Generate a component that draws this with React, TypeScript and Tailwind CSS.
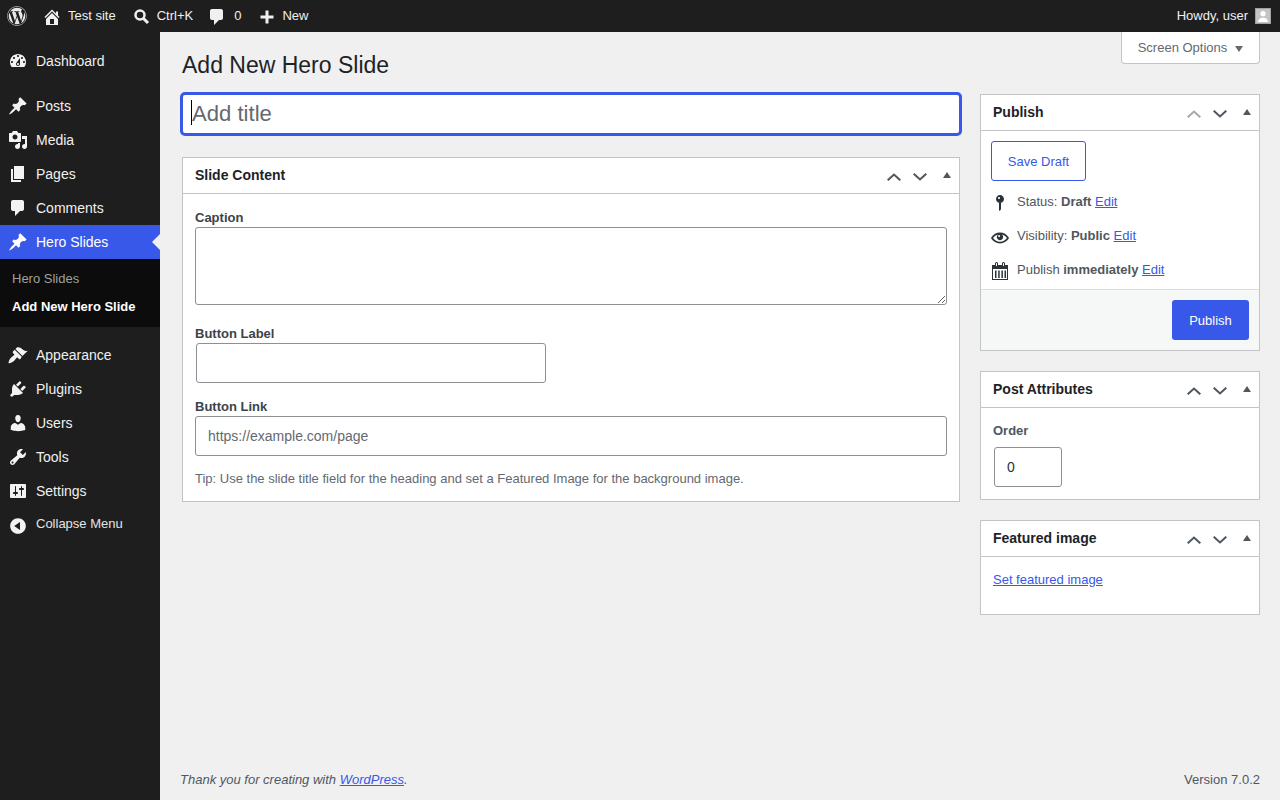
import React from 'react';
import { FaWordpress } from 'react-icons/fa';

const paths: Record<string, string> = {
  dashboard: 'M3.76 16h12.48c1.1-1.37 1.76-3.11 1.76-5 0-4.42-3.58-8-8-8s-8 3.58-8 8c0 1.89.66 3.63 1.76 5zM10 4c.55 0 1 .45 1 1s-.45 1-1 1-1-.45-1-1 .45-1 1-1zM6 6c.55 0 1 .45 1 1s-.45 1-1 1-1-.45-1-1 .45-1 1-1zm8 0c.55 0 1 .45 1 1s-.45 1-1 1-1-.45-1-1 .45-1 1-1zm-5.37 5.55L12 7v6c0 1.1-.9 2-2 2s-2-.9-2-2c0-.57.24-1.08.63-1.45zM4 10c.55 0 1 .45 1 1s-.45 1-1 1-1-.45-1-1 .45-1 1-1zm12 0c.55 0 1 .45 1 1s-.45 1-1 1-1-.45-1-1 .45-1 1-1zm-5 3c0-.55-.45-1-1-1s-1 .45-1 1 .45 1 1 1 1-.45 1-1z',
  pin: 'M10.44 3.02l1.82-1.82 6.36 6.35-1.83 1.82c-1.05-.68-2.48-.57-3.41.36l-.75.75c-.92.93-1.04 2.35-.35 3.41l-1.83 1.82-2.41-2.41-2.8 2.79c-.42.42-3.38 2.71-3.8 2.29s1.86-3.39 2.28-3.81l2.79-2.79L4.1 9.36l1.83-1.82c1.05.69 2.48.57 3.4-.36l.75-.75c.93-.92 1.05-2.35.36-3.41z',
  media: 'M13 11V4c0-.55-.45-1-1-1h-1.67L9 1H5L3.67 3H2c-.55 0-1 .45-1 1v7c0 .55.45 1 1 1h10c.55 0 1-.45 1-1zM7 4.5c1.38 0 2.5 1.12 2.5 2.5S8.38 9.5 7 9.5 4.5 8.38 4.5 7 5.62 4.5 7 4.5zM14 6h5v10.5c0 1.38-1.12 2.5-2.5 2.5S14 17.88 14 16.5s1.12-2.5 2.5-2.5c.17 0 .34.02.5.05V9h-3V6zm-4 8.05V13h2v3.5c0 1.38-1.12 2.5-2.5 2.5S7 17.88 7 16.5 8.12 14 9.5 14c.17 0 .34.02.5.05z',
  page: 'M6 15V2h10v13H6zm-1 1h8v2H3V5h2v11z',
  comment: 'M5 2h9c1.1 0 2 .9 2 2v7c0 1.1-.9 2-2 2h-2l-5 5v-5H5c-1.1 0-2-.9-2-2V4c0-1.1.9-2 2-2z',
  appearance: 'M14.48 11.06L7.41 3.99l1.5-1.5c.5-.56 2.3-.47 3.51.32 1.21.8 1.43 1.28 2.91 2.1 1.18.64 2.45 1.26 4.45.85zm-.71.71L6.7 4.7 4.93 6.47c-.39.39-.39 1.02 0 1.41l1.06 1.06c.39.39.39 1.03 0 1.42-.6.6-1.43 1.11-2.21 1.69-.35.26-.7.53-1.01.84-1.43 1.43-2.56 4.77-2.06 5.27.5.5 3.84-.63 5.27-2.06.31-.31.58-.66.84-1.01.58-.78 1.09-1.61 1.69-2.21.39-.39 1.03-.39 1.42 0l1.06 1.06c.39.39 1.02.39 1.41 0z',
  plugins: 'M13.11 4.36L9.87 7.6 8 5.73l3.24-3.24c.35-.34 1.05-.2 1.56.32.52.51.66 1.21.31 1.55zm-8 1.77l.91-1.12 9.01 9.01-1.19.84c-.71.71-2.63 1.16-3.82 1.16H6.14L4.9 17.26c-.59.59-1.54.59-2.12 0-.59-.58-.59-1.53 0-2.12l1.24-1.24v-3.88c0-1.13.4-3.19 1.09-3.89zm7.26 3.97l3.24-3.24c.34-.35 1.04-.21 1.55.31.52.51.66 1.21.31 1.55l-3.24 3.25z',
  users: 'M10 9.25c-2.27 0-2.73-3.44-2.73-3.44C7 4.02 7.82 2 9.97 2c2.16 0 2.98 2.02 2.71 3.81 0 0-.41 3.44-2.68 3.44zm0 2.57L12.72 10c2.39 0 4.52 2.33 4.52 4.53v2.49s-3.65 1.13-7.24 1.13c-3.65 0-7.24-1.13-7.24-1.13v-2.49c0-2.25 1.94-4.48 4.47-4.48z',
  tools: 'M16.68 9.77c-1.34 1.34-3.3 1.67-4.95.99l-5.41 6.52c-.99.99-2.59.99-3.58 0s-.99-2.59 0-3.57l6.52-5.42c-.68-1.65-.35-3.61.99-4.95 1.28-1.28 3.12-1.62 4.72-1.06l-2.89 2.89 2.82 2.82 2.86-2.87c.53 1.58.18 3.39-1.08 4.65zM3.81 16.21c.4.39 1.04.39 1.43 0 .4-.4.4-1.04 0-1.43-.39-.4-1.03-.4-1.43 0-.39.39-.39 1.03 0 1.43z',
  settings: 'M18 16V4c0-.55-.45-1-1-1H3c-.55 0-1 .45-1 1v12c0 .55.45 1 1 1h14c.55 0 1-.45 1-1zM8 11h1c.55 0 1 .45 1 1s-.45 1-1 1H8v1.5c0 .28-.22.5-.5.5s-.5-.22-.5-.5V13H6c-.55 0-1-.45-1-1s.45-1 1-1h1V5.5c0-.28.22-.5.5-.5s.5.22.5.5V11zm5-2h-1c-.55 0-1-.45-1-1s.45-1 1-1h1V5.5c0-.28.22-.5.5-.5s.5.22.5.5V7h1c.55 0 1 .45 1 1s-.45 1-1 1h-1v5.5c0 .28-.22.5-.5.5s-.5-.22-.5-.5V9z',
  collapse: 'M10 2.16c4.33 0 7.84 3.51 7.84 7.84s-3.51 7.84-7.84 7.84S2.16 14.33 2.16 10 5.71 2.16 10 2.16zm2 11.72V6.12L6.18 9.97z',
  home: 'M16 8.5l1.53 1.53-1.06 1.06L10 4.62l-6.47 6.47-1.06-1.06L10 2.5l4 4v-2h2v4zm-6-2.46l6 5.99V18H4v-5.97zM12 17v-5H8v5h4z',
  plus: 'M16.500 8.500v3h-5v5h-3v-5h-5v-3h5v-5h3v5z',
  status: 'M14 6c0 1.86-1.28 3.41-3 3.86V16c0 1-2 2-2 2V9.86c-1.72-.45-3-2-3-3.86 0-2.21 1.79-4 4-4s4 1.79 4 4zM8 5c0 .55.45 1 1 1s1-.45 1-1-.45-1-1-1-1 .45-1 1z',
  eye: 'M19.7 9.4C17.7 6 14 3.9 10 3.9S2.3 6 .3 9.4L0 10l.3.6c2 3.4 5.7 5.5 9.7 5.5s7.7-2.1 9.7-5.5l.3-.6-.3-.6zM10 14.1c-3.1 0-6-1.6-7.7-4.1C3.6 8 5.7 6.6 8 6.1c-.9.6-1.500 1.700-1.500 2.900 0 1.900 1.600 3.500 3.500 3.500s3.500-1.600 3.500-3.500c0-1.200-.6-2.200-1.500-2.900 2.300.5 4.400 1.900 5.700 3.900-1.700 2.500-4.600 4.100-7.700 4.100zM9 6.700a1.100 1.100 0 1 0 .01 0z',
  calendar: 'M2 4h3V2.500a1.500 1.500 0 0 1 3 0V4h4V2.500a1.500 1.500 0 0 1 3 0V4h3v15H2V4zM6 2.500V5h1V2.500a.5.500 0 0 0-1 0zM13 2.500V5h1V2.500a.5.500 0 0 0-1 0zM3 8v10h14V8H3zm2 1.500h1.500V17H5V9.500zm3.200 0h1.500V17H8.200V9.500zm3.200 0h1.500V17h-1.500V9.500zm3.100 0H16V17h-1.500V9.500z',
};

const Icon = ({ name, className = 'w-5 h-5' }: { name: string; className?: string }) => (
  <svg viewBox="0 0 20 20" className={className} fill="currentColor">
    <path fillRule="evenodd" d={paths[name]} />
  </svg>
);

const menuTop = [{ icon: 'pin', label: 'Posts' }, { icon: 'media', label: 'Media' }, { icon: 'page', label: 'Pages' }, { icon: 'comment', label: 'Comments' }];
const menuBottom = [
  { icon: 'appearance', label: 'Appearance' },
  { icon: 'plugins', label: 'Plugins' },
  { icon: 'users', label: 'Users' },
  { icon: 'tools', label: 'Tools' },
  { icon: 'settings', label: 'Settings' },
];

const MenuItem = ({ icon, label }: { icon: string; label: string }) => (
  <div className="h-[34px] flex items-center gap-2 pl-2 text-[14px] text-[#f0f0f0]">
    <Icon name={icon} className="w-5 h-5 text-[#f3f3f3] shrink-0" />
    <span>{label}</span>
  </div>
);

const BoxControls = ({ upDisabled }: { upDisabled?: boolean }) => (
  <div className="flex items-center text-[#50575e]">
    <svg viewBox="0 0 14 8" className={`w-[14px] h-2 mt-[2px] ${upDisabled ? 'text-[#a7aaad]' : ''}`} fill="none" stroke="currentColor" strokeWidth="2">
      <path d="M.7 7.300L7 1.500l6.300 5.800" />
    </svg>
    <svg viewBox="0 0 14 8" className="w-[14px] h-2 ml-3 mt-[2px]" fill="none" stroke="currentColor" strokeWidth="2">
      <path d="M.7.700L7 6.500 13.300.700" />
    </svg>
    <svg viewBox="0 0 8 6" className="w-2 h-[6px] ml-[16px] mr-2 -mt-[2px]" fill="currentColor">
      <path d="M4 0l4 6H0z" />
    </svg>
  </div>
);

const Box = ({ title, upDisabled, className = '', children }: { title: string; upDisabled?: boolean; className?: string; children: React.ReactNode }) => (
  <div className={`bg-white border border-[#c3c4c7] ${className}`}>
    <div className="h-9 flex items-center justify-between pl-3 border-b border-[#c3c4c7]">
      <h2 className="text-[14px] font-bold text-[#1d2327]">{title}</h2>
      <BoxControls upDisabled={upDisabled} />
    </div>
    {children}
  </div>
);

const MetaRow = ({ icon, iconClass = 'w-5 h-5 mt-[2px]', children }: { icon: string; iconClass?: string; children: React.ReactNode }) => (
  <div className="h-[34px] flex items-center pl-[9px] text-[13px] text-[#50575e]">
    <Icon name={icon} className={`text-[#2c3338] shrink-0 ${iconClass}`} />
    <span className="ml-[7px]">{children}</span>
  </div>
);

const Edit = () => <a href="#" className="text-[#3858e9] underline">Edit</a>;

const App = () => {
  return (
    <div className="h-screen flex flex-col overflow-hidden bg-[#f0f0f1] text-[13px] text-[#3c434a] font-['Liberation_Sans',Arial,sans-serif]">
      {/* admin bar */}
      <header className="h-8 shrink-0 bg-[#1e1e1e] text-[#f0f0f1] flex items-center text-[13px]">
        <FaWordpress className="w-5 h-5 ml-[7px] text-[#e8e8e8]" />
        <Icon name="home" className="w-5 h-5 ml-[15px] mt-[1px]" />
        <span className="ml-[6px]">Test site</span>
        <svg viewBox="0 0 20 20" className="w-5 h-5 ml-[15px] mt-[2px]" fill="none" stroke="currentColor">
          <circle cx="9" cy="8" r="4.500" strokeWidth="2.500" />
          <path d="M12.500 11.500l4.500 4.500" strokeWidth="3" />
        </svg>
        <span className="ml-[6px]">Ctrl+K</span>
        <Icon name="comment" className="w-5 h-5 ml-[14px] mt-[1px]" />
        <span className="ml-[7px]">0</span>
        <Icon name="plus" className="w-5 h-5 ml-[16px] mt-[1px]" />
        <span className="ml-[5px]">New</span>
        <span className="ml-auto">Howdy, user</span>
        <div className="w-4 h-4 ml-[7px] mr-[9px] bg-[#c4c4c4] border border-[#a0a0a0] flex items-end justify-center overflow-hidden">
          <svg viewBox="0 0 16 16" className="w-4 h-4 text-white" fill="currentColor">
            <circle cx="8" cy="6.500" r="3" />
            <path d="M2.500 16c0-3.500 2.500-5 5.500-5s5.500 1.500 5.500 5z" />
          </svg>
        </div>
      </header>

      <div className="flex-1 flex min-h-0">
        {/* sidebar */}
        <aside className="w-40 shrink-0 bg-[#1e1e1e] pt-3">
          <MenuItem icon="dashboard" label="Dashboard" />
          <div className="h-[11px]" />
          {menuTop.map((m) => (
            <MenuItem key={m.label} icon={m.icon} label={m.label} />
          ))}
          <div className="relative h-[34px] flex items-center gap-2 pl-2 bg-[#3858e9] text-white text-[14px]">
            <Icon name="pin" />
            <span>Hero Slides</span>
            <div className="absolute right-0 top-[9px] border-y-[8px] border-r-[8px] border-y-transparent border-r-[#f0f0f1]" />
          </div>
          <div className="h-[68px] bg-[#0c0c0c] pl-3 pt-[6px] text-[13px]">
            <div className="h-7 flex items-center text-[#a0a0a0]">Hero Slides</div>
            <div className="h-7 flex items-center font-bold text-white">Add New Hero Slide</div>
          </div>
          <div className="h-[11px]" />
          {menuBottom.map((m) => (
            <MenuItem key={m.label} icon={m.icon} label={m.label} />
          ))}
          <div className="h-[34px] flex items-center gap-2 pl-2 text-[13px] text-[#e4e4e4]">
            <Icon name="collapse" className="w-5 h-5 text-[#f3f3f3] mt-[1px]" />
            <span className="-mt-[2px]">Collapse Menu</span>
          </div>
        </aside>

        {/* content */}
        <main className="flex-1 min-w-0 flex flex-col pl-5 pr-5">
          <div className="h-[62px] shrink-0 flex justify-between items-start pl-[2px]">
            <h1 className="text-[23px] leading-[29px] font-normal text-[#1d2327] pt-[19px]">Add New Hero Slide</h1>
            <button className="w-[139px] h-8 bg-white border border-t-0 border-[#c3c4c7] rounded-b-[4px] flex items-center justify-center gap-2 text-[13px] text-[#646970]">
              Screen Options
              <svg viewBox="0 0 8 6" className="w-2 h-[6px] mt-[2px]" fill="currentColor">
                <path d="M0 0h8L4 6z" />
              </svg>
            </button>
          </div>

          <div className="flex-1 flex items-start pl-[2px]">
            <div className="w-[778px] shrink-0">
              <div className="relative">
                <input
                  placeholder="Add title"
                  className="block w-[782px] h-[44px] -ml-[2px] -mt-[2px] bg-white border-[3px] border-[#3858e9] rounded-[5px] pl-[9px] text-[22.100px] text-[#2c3338] outline-none placeholder:text-[#646970]"
                />
                <span className="absolute left-[9px] top-[8px] w-px h-[25px] bg-black" />
              </div>

              <Box title="Slide Content" className="mt-[21px]">
                <div className="px-3 pt-[15px] pb-[13px]">
                  <label className="block font-bold text-[13px] leading-[18px]">Caption</label>
                  <textarea className="block w-full h-[78px] bg-white border border-[#8c8f94] rounded-[3px] outline-none" />
                  <label className="block font-bold text-[13px] leading-[18px] mt-[20px]">Button Label</label>
                  <input className="block w-[350px] h-10 ml-px bg-white border border-[#8c8f94] rounded-[3px] outline-none" />
                  <label className="block font-bold text-[13px] leading-[18px] mt-[15px]">Button Link</label>
                  <input
                    placeholder="https://example.com/page"
                    className="block w-full h-10 px-3 bg-white border border-[#8c8f94] rounded-[3px] text-[14px] outline-none placeholder:text-[#646970]"
                  />
                  <p className="text-[13px] leading-[18px] text-[#646970] mt-[14px]">
                    Tip: Use the slide title field for the heading and set a Featured Image for the background image.
                  </p>
                </div>
              </Box>
            </div>

            <div className="w-[280px] ml-5 shrink-0 flex flex-col gap-5">
              <Box title="Publish" upDisabled>
                <div className="pl-[10px] pt-[10px]">
                  <button className="w-[95px] h-10 pt-px border border-[#3858e9] rounded-[3px] text-[#3858e9] text-[13px]">Save Draft</button>
                </div>
                <div className="pt-[4px]">
                  <MetaRow icon="status">Status: <b>Draft</b> <Edit /></MetaRow>
                  <MetaRow icon="eye" iconClass="w-[18px] h-[18px] mx-px mt-1">Visibility: <b>Public</b> <Edit /></MetaRow>
                  <MetaRow icon="calendar">Publish <b>immediately</b> <Edit /></MetaRow>
                </div>
                <div className="h-[61px] mt-[2px] border-t border-[#dcdcde] bg-[#f6f7f7] flex justify-end items-start pt-[10px] pr-[10px]">
                  <button className="w-[77px] h-10 pt-px bg-[#3858e9] rounded-[3px] text-white text-[13px]">Publish</button>
                </div>
              </Box>

              <Box title="Post Attributes">
                <div className="pl-3 pt-[15px] pb-3">
                  <div className="font-bold text-[13px] leading-[15px] text-[#50575e]">Order</div>
                  <input defaultValue="0" className="block w-[68px] h-10 ml-px mt-[9px] px-3 bg-white border border-[#8c8f94] rounded-[3px] text-[14px] text-[#2c3338] outline-none" />
                </div>
              </Box>

              <Box title="Featured image">
                <div className="h-[57px] pl-3 pt-[13px]">
                  <a href="#" className="text-[13px] text-[#3858e9] underline">Set featured image</a>
                </div>
              </Box>
            </div>
          </div>

          <footer className="h-[42px] pt-3 shrink-0 flex justify-between text-[13px] text-[#50575e]">
            <span className="italic">Thank you for creating with <a href="#" className="text-[#3858e9] underline">WordPress</a>.</span>
            <span>Version 7.0.2</span>
          </footer>
        </main>
      </div>
    </div>
  );
};

export default App;
